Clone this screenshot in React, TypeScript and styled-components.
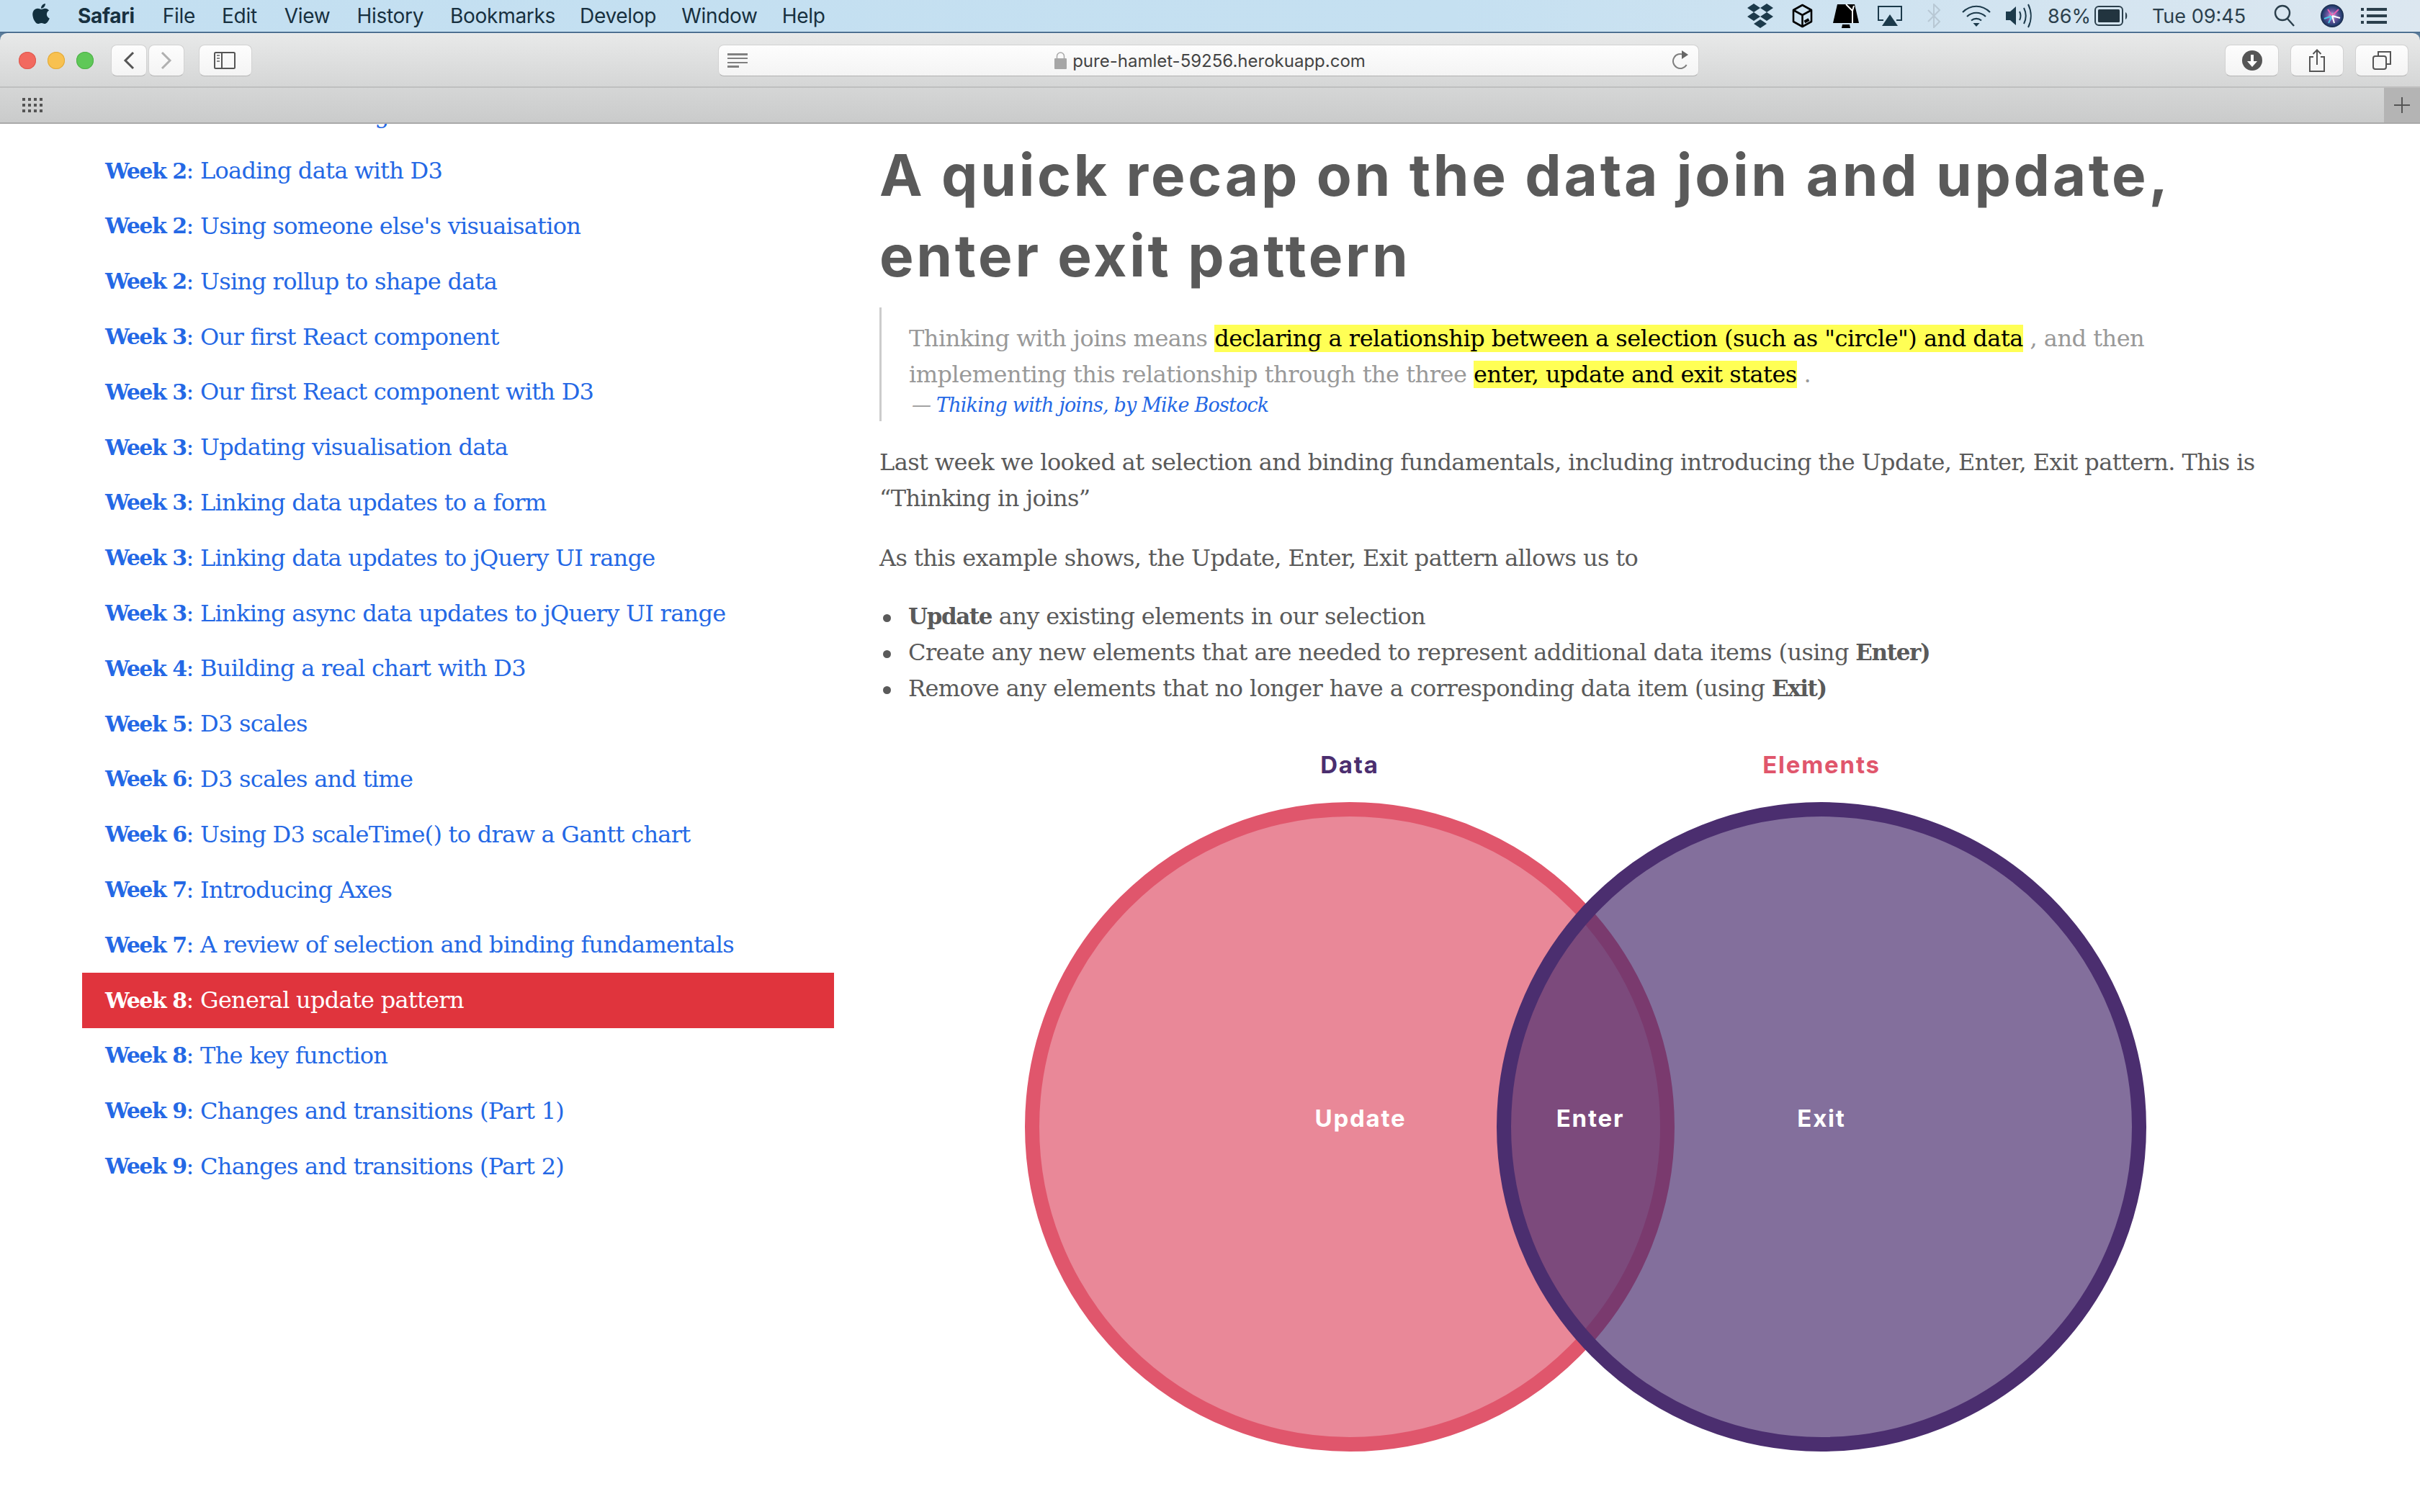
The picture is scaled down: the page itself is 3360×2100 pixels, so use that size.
import React from 'react';
import styled, { createGlobalStyle } from 'styled-components';
import { FaApple } from 'react-icons/fa';

const Global = createGlobalStyle`
  html, body { margin: 0; padding: 0; background: #fff; }
  body { width: 3360px; height: 2100px; overflow: hidden; }
`;

const serif = `"DejaVu Serif", "Liberation Serif", serif`;
const ui = `Inter, "Liberation Sans", sans-serif`;

const Screen = styled.div`
  width: 3360px; height: 2100px; display: flex; flex-direction: column; overflow: hidden; background: #fff;
`;
const MenuBar = styled.header`
  height: 46px; box-sizing: border-box; flex: none; display: flex; align-items: center; padding: 0 46px 0 42px;
  background: linear-gradient(90deg, #c3dff1 0%, #c5e0f1 60%, #dce7f0 100%);
  border-bottom: 2px solid #4f7192; font: 400 28px ${ui}; color: #17303f;
`;
const MenuItem = styled.span<{ $bold?: boolean; $ml: number }>`
  margin-left: ${p => p.$ml}px; font-weight: ${p => (p.$bold ? 700 : 400)}; letter-spacing: -0.3px; white-space: nowrap; line-height: 44px;
`;
const AppleMark = styled(FaApple)`
  width: 30px; height: 32px; color: #12303f; margin-top: -6px; flex: none;
`;
const Status = styled.div`
  margin-left: auto; display: flex; align-items: center; height: 44px;
`;
const StatusSlot = styled.span<{ $w: number; $ml: number }>`
  width: ${p => p.$w}px; margin-left: ${p => p.$ml}px; flex: none; display: flex; align-items: center; justify-content: center;
  font: 400 27px ${ui}; color: #2b3f4c; white-space: nowrap;
  svg { display: block; }
`;

const WindowTop = styled.div`
  flex: none; background: #5b7c9a; 
`;
const Toolbar = styled.div`
  height: 76px; box-sizing: border-box; display: flex; align-items: flex-start; padding: 15px 16px 0 26px;
  background: linear-gradient(180deg, #e8e9e9 0%, #d5d6d6 100%);
  border-radius: 10px 10px 0 0; border-top: 1px solid #f2f2f2; border-bottom: 2px solid #bfbfbf;
`;
const Lights = styled.div`
  display: flex; gap: 16px; height: 44px; align-items: center;
`;
const Light = styled.span<{ $c: string; $b: string }>`
  width: 24px; height: 24px; border-radius: 50%; background: ${p => p.$c}; box-shadow: inset 0 0 0 1px ${p => p.$b};
`;
const ToolButton = styled.button<{ $w: number; $ml: number }>`
  width: ${p => p.$w}px; height: 44px; margin-left: ${p => p.$ml}px; padding: 0; flex: none;
  display: flex; align-items: center; justify-content: center;
  background: linear-gradient(180deg, #fdfdfd, #f4f4f4); border: 1px solid #d2d2d2; border-bottom-color: #b5b5b5; border-radius: 8px;
  svg { display: block; }
`;
const UrlBar = styled.div`
  width: 1362px; height: 44px; box-sizing: border-box; margin-left: 647px; flex: none; padding: 0 12px;
  display: flex; align-items: center; justify-content: space-between;
  background: linear-gradient(180deg, #fdfdfd, #f4f4f4); border: 1px solid #d2d2d2; border-bottom-color: #b0b0b0; border-radius: 8px;
`;
const UrlCenter = styled.div`
  display: flex; align-items: center; gap: 8px; font: 400 24px ${ui}; color: #444; letter-spacing: 0; margin-left: 0;
`;
const RightTools = styled.div`
  margin-left: auto; display: flex;
`;
const TabBar = styled.div`
  height: 50px; box-sizing: border-box; flex: none; display: flex; justify-content: space-between; align-items: stretch;
  padding-left: 31px; background: linear-gradient(180deg, #d5d6d6 0%, #cacbcb 100%); border-bottom: 2px solid #a9a9a9;
`;
const Dots = styled.div`
  display: grid; grid-template-columns: repeat(4, 4px); grid-auto-rows: 4px; gap: 4px; align-content: center;
  span { background: #555; }
`;
const PlusCell = styled.div`
  width: 50px; background: #b4b4b4; display: flex; align-items: center; justify-content: center;
`;

const Page = styled.main`
  flex: 1; display: flex; overflow: hidden; min-height: 0;
`;
const Sidebar = styled.nav`
  width: 1044px; margin-left: 114px; flex: none; margin-top: -50px;
`;
const NavRow = styled.a<{ $active?: boolean }>`
  display: flex; align-items: center; height: 76.8px; box-sizing: border-box; padding-left: 32px; white-space: nowrap;
  font: 400 32px ${serif}; letter-spacing: -0.72px;
  color: ${p => (p.$active ? '#fff' : '#2468e5')};
  background: ${p => (p.$active ? '#e0343d' : 'transparent')};
  b { font-weight: 700; font-size: 30px; white-space: pre; letter-spacing: -1.5px; }
  span { white-space: pre; }
`;
const Article = styled.article`
  margin-left: 63px; width: 2060px; flex: none; color: #5a5a5a; font: 400 32px/50px ${serif}; letter-spacing: -0.6px;
`;
const Title = styled.h1`
  margin: 15px 0 16px; font: 700 80px/112px ${ui}; color: #5a5a5a; letter-spacing: 3.7px; white-space: nowrap;
`;
const Quote = styled.blockquote`
  margin: 0 0 32px; padding: 18px 0 0 38px; height: 158px; box-sizing: border-box; border-left: 3px solid #ccc; color: #999; white-space: nowrap; letter-spacing: -0.5px;
`;
const Mark = styled.mark`
  background: #ffff55; color: #000;
`;
const Cite = styled.cite`
  display: block; margin: -3px 0 0 4px; font: italic 400 27px/42px ${serif}; letter-spacing: -0.8px; color: #999;
  a { color: #2468e5; }
`;
const Para = styled.p`
  margin: 0 0 33px; white-space: nowrap;
`;
const Bullets = styled.ul`
  margin: -2px 0 0; padding: 0 0 0 40px; white-space: nowrap; list-style: none;
  b { font-weight: 700; font-size: 31px; letter-spacing: -1.4px; }
  li::before {
    content: ""; display: inline-block; width: 11px; height: 11px; border-radius: 50%; background: #5a5a5a;
    margin: 0 24px 0 -35px; vertical-align: middle;
  }
`;
const Venn = styled.svg`
  display: block; margin: 39px 0 0 179px; width: 1600px; height: 1010px; overflow: visible;
`;
const VennLabel = styled.text<{ $c: string }>`
  font: 700 33px ${ui}; letter-spacing: 1.8px; fill: ${p => p.$c}; text-anchor: middle; dominant-baseline: central;
`;

const nav: [string, string][] = [
  ['Week 2', 'A look at loading in the DOM'],
  ['Week 2', 'Loading data with D3'],
  ['Week 2', "Using someone else's visuaisation"],
  ['Week 2', 'Using rollup to shape data'],
  ['Week 3', 'Our first React component'],
  ['Week 3', 'Our first React component with D3'],
  ['Week 3', 'Updating visualisation data'],
  ['Week 3', 'Linking data updates to a form'],
  ['Week 3', 'Linking data updates to jQuery UI range'],
  ['Week 3', 'Linking async data updates to jQuery UI range'],
  ['Week 4', 'Building a real chart with D3'],
  ['Week 5', 'D3 scales'],
  ['Week 6', 'D3 scales and time'],
  ['Week 6', 'Using D3 scaleTime() to draw a Gantt chart'],
  ['Week 7', 'Introducing Axes'],
  ['Week 7', 'A review of selection and binding fundamentals'],
  ['Week 8', 'General update pattern'],
  ['Week 8', 'The key function'],
  ['Week 9', 'Changes and transitions (Part 1)'],
  ['Week 9', 'Changes and transitions (Part 2)'],
];

const menu: [string, number, boolean?][] = [
  ['Safari', 36, true], ['File', 39], ['Edit', 37], ['View', 38], ['History', 37],
  ['Bookmarks', 37], ['Develop', 34], ['Window', 35], ['Help', 34],
];

const Dropbox = () => (
  <svg width="36" height="34" viewBox="0 0 36 34" fill="#1c3a4b">
    <path d="M9 0l9 6-9 6-9-6zM27 0l9 6-9 6-9-6zM9 12l9 6-9 6-9-6zM27 12l9 6-9 6-9-6zM18 22l9 6-9 6-9-6z" />
  </svg>
);
const BoxIcon = () => (
  <svg width="29" height="34" viewBox="0 0 29 34" fill="none" stroke="#000" strokeWidth="2.6">
    <path d="M14.5 2L27 9v16l-12.5 7L2 25V9z" strokeLinejoin="round" />
    <path d="M2 9l12.5 7L27 9M14.5 16v16" />
    <path d="M17.5 25.5l6-3.5" strokeWidth="4" />
  </svg>
);
const TowerIcon = () => (
  <svg width="36" height="34" viewBox="0 0 36 34">
    <path d="M6 1h24l6 26H0z" fill="#000" />
    <path d="M18 1l9 9M29 3l-2 7v17" stroke="#fff" strokeWidth="2" fill="none" />
    <path d="M13 29h10l1 5H12z" fill="#000" />
  </svg>
);
const Airplay = () => (
  <svg width="36" height="30" viewBox="0 0 36 30" fill="none">
    <path d="M9 21H2V2h32v19h-7" stroke="#1c3a4b" strokeWidth="2" />
    <path d="M18 13l11 16H7z" fill="#1c3a4b" />
  </svg>
);
const Bluetooth = () => (
  <svg width="20" height="34" viewBox="0 0 20 34" fill="none" stroke="#b8c8d4" strokeWidth="2">
    <path d="M2 9l16 16-8 8V1l8 8L2 25" />
  </svg>
);
const Wifi = () => (
  <svg width="40" height="30" viewBox="0 0 40 30" fill="none" stroke="#1c3a4b" strokeWidth="2.2">
    <path d="M1 10c11-11 27-11 38 0M7 16c7.5-7 18.500-7 26 0M13 21.500c4-3.500 10-3.500 14 0" />
    <path d="M15.500 25h9L20 30z" fill="#1c3a4b" stroke="none" />
  </svg>
);
const Volume = () => (
  <svg width="40" height="34" viewBox="0 0 40 34" fill="none" stroke="#1c3a4b" strokeWidth="2">
    <path d="M0 11h6l8-7v26l-8-7H0z" fill="#1c3a4b" stroke="none" />
    <path d="M19 11c2 4 2 8 0 12M25 6c3.500 7 3.500 15 0 22M31 1c5 10 5 22 0 32" />
  </svg>
);
const Battery = () => (
  <svg width="47" height="28" viewBox="0 0 47 28">
    <rect x="1" y="1" width="38" height="26" rx="5" fill="none" stroke="#2b3f4c" strokeWidth="2" />
    <rect x="5" y="5" width="30" height="18" rx="1.500" fill="#22343f" />
    <path d="M43 9c3 1 3 9 0 10z" fill="#2b3f4c" />
  </svg>
);
const Search = () => (
  <svg width="30" height="32" viewBox="0 0 30 32" fill="none" stroke="#2b3f4c" strokeWidth="2.400">
    <circle cx="12" cy="12" r="10" />
    <path d="M19 20l9 10" />
  </svg>
);
const Siri = () => (
  <svg width="32" height="32" viewBox="0 0 32 32">
    <defs>
      <radialGradient id="siriBg" cx="50%" cy="50%" r="55%">
        <stop offset="0%" stopColor="#d9e2f2" />
        <stop offset="35%" stopColor="#7a5aa8" />
        <stop offset="75%" stopColor="#263f73" />
        <stop offset="100%" stopColor="#0f1a2c" />
      </radialGradient>
    </defs>
    <circle cx="16" cy="16" r="16" fill="url(#siriBg)" />
    <path d="M16 16L5 20M16 16L11 26" stroke="#4cc8e8" strokeWidth="2" />
    <path d="M16 16l9-9M16 16l-6-9" stroke="#e85fb0" strokeWidth="2" />
    <path d="M16 16l11 3M16 16l3 10" stroke="#fff" strokeWidth="2" />
  </svg>
);
const ListIcon = () => (
  <svg width="36" height="24" viewBox="0 0 36 24" fill="#2b3f4c">
    <rect x="0" y="1" width="4" height="4" /><rect x="0" y="10" width="4" height="4" /><rect x="0" y="19" width="4" height="4" />
    <rect x="8" y="1" width="28" height="4" /><rect x="8" y="10" width="28" height="4" /><rect x="8" y="19" width="28" height="4" />
  </svg>
);
const Chevron = ({ right, color }: { right?: boolean; color: string }) => (
  <svg width="16" height="26" viewBox="0 0 16 26" fill="none" stroke={color} strokeWidth="3">
    <path d={right ? 'M2 2l11 11L2 24' : 'M14 2L3 13l11 11'} />
  </svg>
);
const SidebarIcon = () => (
  <svg width="32" height="24" viewBox="0 0 32 24" fill="none" stroke="#555" strokeWidth="2">
    <rect x="1" y="1" width="28" height="22" rx="1.500" />
    <path d="M11 1v22" />
    <path d="M4 5h4M4 9h4M4 13h4" stroke="#888" />
  </svg>
);
const ReaderIcon = () => (
  <svg width="28" height="20" viewBox="0 0 28 20" fill="#808080">
    <rect y="0" width="28" height="3" /><rect y="6" width="28" height="2" /><rect y="12" width="28" height="2" /><rect y="17" width="16" height="3" />
  </svg>
);
const Lock = () => (
  <svg width="17" height="24" viewBox="0 0 17 24" fill="none">
    <path d="M3.500 11V6a5 5 0 0 1 10 0v5" stroke="#aaa" strokeWidth="1.500" />
    <rect y="9" width="17" height="15" rx="1" fill="#a6a6a6" />
  </svg>
);
const Reload = () => (
  <svg width="24" height="30" viewBox="0 0 24 30" fill="none">
    <path d="M11 6a10 10 0 1 0 10 10" stroke="#808080" strokeWidth="2" transform="rotate(30 11 16)" />
    <path d="M13 1l9 6-9 6z" fill="#666" />
  </svg>
);
const DownloadIcon = () => (
  <svg width="28" height="28" viewBox="0 0 28 28">
    <circle cx="14" cy="14" r="14" fill="#555" />
    <path d="M12 6h4v9h5l-7 8-7-8h5z" fill="#fff" />
  </svg>
);
const ShareIcon = () => (
  <svg width="24" height="32" viewBox="0 0 24 32" fill="none" stroke="#555" strokeWidth="2">
    <path d="M7 11H2v20h20V11h-5M12 22V2M6.500 7L12 1.500 17.500 7" />
  </svg>
);
const TabsIcon = () => (
  <svg width="26" height="26" viewBox="0 0 26 26" fill="none" stroke="#555" strokeWidth="2">
    <path d="M8 7V1h17v17h-6" />
    <rect x="1" y="7" width="18" height="18" rx="3" fill="#f8f8f8" />
  </svg>
);
const PlusIcon = () => (
  <svg width="24" height="24" viewBox="0 0 24 24" stroke="#555" strokeWidth="2">
    <path d="M12 1v22M1 12h22" />
  </svg>
);

export default function App() {
  return (
    <Screen>
      <Global />
      <MenuBar>
        <AppleMark />
        {menu.map(([t, ml, bold]) => (
          <MenuItem key={t} $ml={ml} $bold={bold}>{t}</MenuItem>
        ))}
        <Status>
          <StatusSlot $w={36} $ml={0}><Dropbox /></StatusSlot>
          <StatusSlot $w={29} $ml={26}><BoxIcon /></StatusSlot>
          <StatusSlot $w={36} $ml={28}><TowerIcon /></StatusSlot>
          <StatusSlot $w={36} $ml={25}><Airplay /></StatusSlot>
          <StatusSlot $w={20} $ml={33}><Bluetooth /></StatusSlot>
          <StatusSlot $w={40} $ml={29}><Wifi /></StatusSlot>
          <StatusSlot $w={40} $ml={21}><Volume /></StatusSlot>
          <StatusSlot $w={50} $ml={23}>86%</StatusSlot>
          <StatusSlot $w={47} $ml={10}><Battery /></StatusSlot>
          <StatusSlot $w={130} $ml={33}>Tue 09:45</StatusSlot>
          <StatusSlot $w={30} $ml={39}><Search /></StatusSlot>
          <StatusSlot $w={32} $ml={35}><Siri /></StatusSlot>
          <StatusSlot $w={36} $ml={24}><ListIcon /></StatusSlot>
        </Status>
      </MenuBar>
      <WindowTop>
        <Toolbar>
          <Lights>
            <Light $c="#f2695f" $b="#dd5a50" />
            <Light $c="#f8c150" $b="#e0a93a" />
            <Light $c="#5fc858" $b="#4fb049" />
          </Lights>
          <ToolButton $w={50} $ml={24}><Chevron color="#555" /></ToolButton>
          <ToolButton $w={50} $ml={2}><Chevron right color="#b0b0b0" /></ToolButton>
          <ToolButton $w={74} $ml={20}><SidebarIcon /></ToolButton>
          <UrlBar>
            <ReaderIcon />
            <UrlCenter><Lock />pure-hamlet-59256.herokuapp.com</UrlCenter>
            <Reload />
          </UrlBar>
          <RightTools>
            <ToolButton $w={75} $ml={0}><DownloadIcon /></ToolButton>
            <ToolButton $w={74} $ml={16}><ShareIcon /></ToolButton>
            <ToolButton $w={74} $ml={16}><TabsIcon /></ToolButton>
          </RightTools>
        </Toolbar>
      </WindowTop>
      <TabBar>
        <Dots>{Array.from({ length: 12 }, (_, i) => <span key={i} />)}</Dots>
        <PlusCell><PlusIcon /></PlusCell>
      </TabBar>
      <Page>
        <Sidebar>
          {nav.map(([w, t], i) => (
            <NavRow key={i} $active={i === 16}><b>{w}</b><span>: {t}</span></NavRow>
          ))}
        </Sidebar>
        <Article>
          <Title>A quick recap on the data join and update,<br />enter exit pattern</Title>
          <Quote>
            Thinking with joins means <Mark>declaring a relationship between a selection (such as "circle") and data</Mark> , and then<br />
            implementing this relationship through the three <Mark>enter, update and exit states</Mark> .
            <Cite>— <a>Thiking with joins, by Mike Bostock</a></Cite>
          </Quote>
          <Para>
            Last week we looked at selection and binding fundamentals, including introducing the Update, Enter, Exit pattern. This is<br />
            “Thinking in joins”
          </Para>
          <Para>As this example shows, the Update, Enter, Exit pattern allows us to</Para>
          <Bullets>
            <li><b>Update</b> any existing elements in our selection</li>
            <li>Create any new elements that are needed to represent additional data items (using <b>Enter)</b></li>
            <li>Remove any elements that no longer have a corresponding data item (using <b>Exit)</b></li>
          </Bullets>
          <Venn viewBox="1400 1020 1600 1010">
            <circle cx="1874" cy="1565" r="441" fill="#e0566c" fillOpacity="0.7" stroke="#e0566c" strokeWidth="20" />
            <circle cx="2529" cy="1565" r="441" fill="#4b2e6f" fillOpacity="0.69" stroke="#4b2e6f" strokeWidth="20" />
            <VennLabel x="1874" y="1062" $c="#4b2e6f">Data</VennLabel>
            <VennLabel x="2529" y="1062" $c="#e0566c">Elements</VennLabel>
            <VennLabel x="1889" y="1553" $c="#fff">Update</VennLabel>
            <VennLabel x="2208" y="1553" $c="#fff">Enter</VennLabel>
            <VennLabel x="2529" y="1553" $c="#fff">Exit</VennLabel>
          </Venn>
        </Article>
      </Page>
    </Screen>
  );
}
